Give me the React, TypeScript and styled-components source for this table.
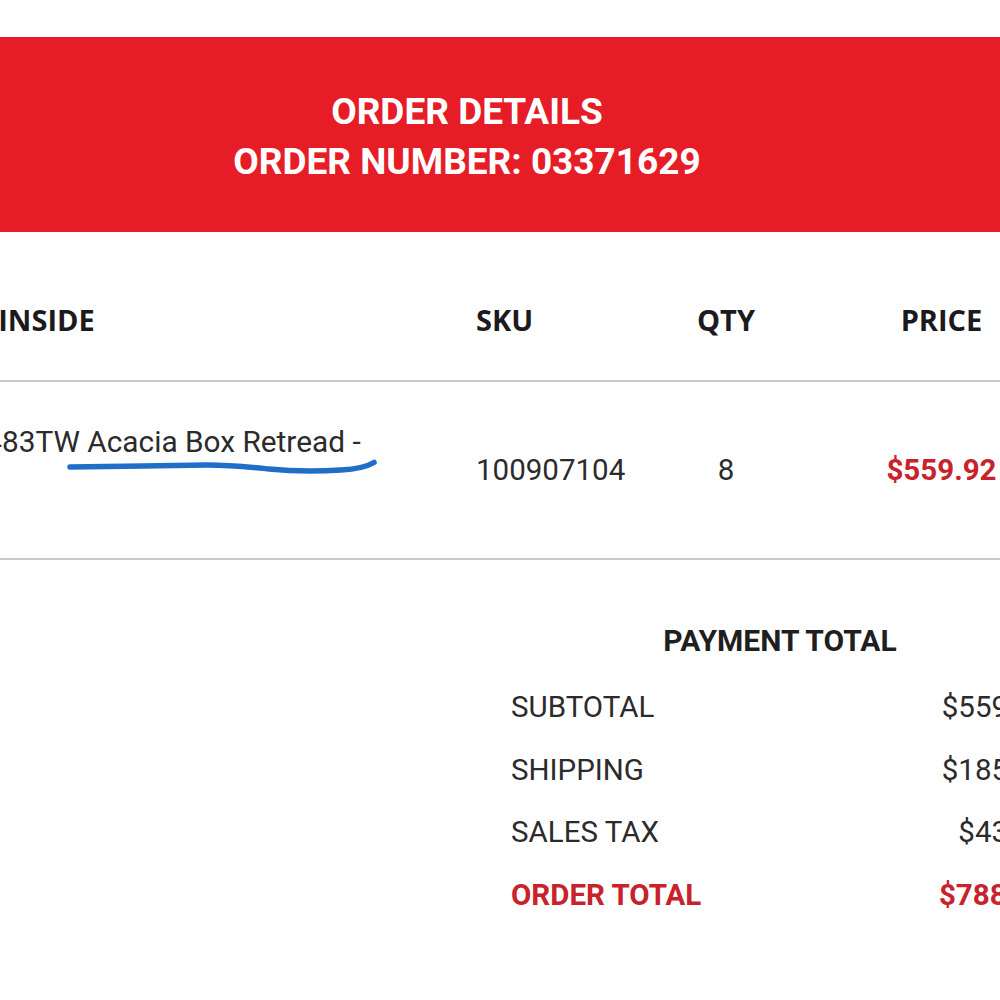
import React from 'react';
import styled, { createGlobalStyle } from 'styled-components';

const GlobalStyle = createGlobalStyle`
  html, body {
    margin: 0;
    padding: 0;
    background: #ffffff;
    overflow: hidden;
  }
  body {
    font-family: Roboto, 'Liberation Sans', Arial, sans-serif;
    color: #2b2b2b;
  }
`;

// the email is wider than the window, so it is shifted left and clipped
const Page = styled.div`
  width: 1240px;
  margin-left: -153px;
  padding-top: 37px;
`;

const Banner = styled.header`
  background: #e61d26;
  color: #ffffff;
  text-align: center;
  padding: 50px 0 45px;
`;

const BannerLine = styled.div`
  font-weight: 700;
  font-size: 37px;
  line-height: 50px;
`;

const Table = styled.div`
  margin-top: 26px;
`;

const Row = styled.div<{ $head?: boolean }>`
  position: relative;
  display: grid;
  grid-template-columns: 629px 180px 140px 1fr;
  height: ${({ $head }) => ($head ? '122px' : '176px')};
  border-bottom: 2px solid #c8c8c8;
`;

const HeadCell = styled.div<{ $center?: boolean }>`
  display: flex;
  align-items: center;
  justify-content: ${({ $center }) => ($center ? 'center' : 'flex-start')};
  font-family: 'Open Sans', 'Liberation Sans', sans-serif;
  font-weight: 700;
  font-size: 29px;
  color: #1d1a1e;
`;

const ProductHead = styled(HeadCell)`
  padding-left: 33px;
`;

const Cell = styled.div<{ $center?: boolean; $price?: boolean }>`
  display: flex;
  align-items: center;
  justify-content: ${({ $center }) => ($center ? 'center' : 'flex-start')};
  font-size: 29.5px;
  font-weight: ${({ $price }) => ($price ? 700 : 400)};
  color: ${({ $price }) => ($price ? '#c8222c' : '#2b2b2b')};
`;

const ProductCell = styled.div`
  padding: 42px 0 0 35px;
  font-size: 29.8px;
  line-height: 36px;
  color: #2b2b2b;
  white-space: nowrap;
`;

const Scribble = styled.svg`
  position: absolute;
  left: 220px;
  top: 75px;
  pointer-events: none;
`;

const Summary = styled.section`
  display: flex;
  justify-content: flex-end;
  padding: 58px 38px 40px 0;
`;

const SummaryBox = styled.div`
  width: 538px;
`;

const SummaryTitle = styled.h2`
  margin: 0 0 12px;
  text-align: center;
  font-size: 30px;
  font-weight: 700;
  line-height: 46px;
  color: #1f1f1f;
`;

const SumRow = styled.div<{ $total?: boolean }>`
  display: flex;
  justify-content: space-between;
  align-items: center;
  height: 62.5px;
  font-size: 29.5px;
  font-weight: ${({ $total }) => ($total ? 700 : 400)};
  color: ${({ $total }) => ($total ? '#c8222c' : '#2b2b2b')};
`;

const totals = [
  { label: 'SUBTOTAL', value: '$559.92' },
  { label: 'SHIPPING', value: '$185.00' },
  { label: 'SALES TAX', value: '$43.68' },
];

export default function App() {
  return (
    <>
      <GlobalStyle />
      <Page>
        <Banner>
          <BannerLine>ORDER DETAILS</BannerLine>
          <BannerLine>ORDER NUMBER: 03371629</BannerLine>
        </Banner>

        <Table>
          <Row $head>
            <ProductHead>WHAT&apos;S INSIDE</ProductHead>
            <HeadCell>SKU</HeadCell>
            <HeadCell $center>QTY</HeadCell>
            <HeadCell $center>PRICE</HeadCell>
          </Row>
          <Row>
            <ProductCell>PK-210-483TW Acacia Box Retread -</ProductCell>
            <Cell>100907104</Cell>
            <Cell $center>8</Cell>
            <Cell $center $price>$559.92</Cell>
            <Scribble width="312" height="20" viewBox="0 0 312 20">
              <path
                d="M3 10 C 40 9.5, 100 8.5, 140 8 C 165 8, 178 9.5, 202 12 C 226 14.5, 252 14.5, 274 13 C 292 12, 302 8.5, 307 5.5"
                fill="none"
                stroke="#1f6fc8"
                strokeWidth="5.5"
                strokeLinecap="round"
              />
            </Scribble>
          </Row>
        </Table>

        <Summary>
          <SummaryBox>
            <SummaryTitle>PAYMENT TOTAL</SummaryTitle>
            {totals.map((t) => (
              <SumRow key={t.label}>
                <span>{t.label}</span>
                <span>{t.value}</span>
              </SumRow>
            ))}
            <SumRow $total>
              <span>ORDER TOTAL</span>
              <span>$788.60</span>
            </SumRow>
          </SummaryBox>
        </Summary>
      </Page>
    </>
  );
}
